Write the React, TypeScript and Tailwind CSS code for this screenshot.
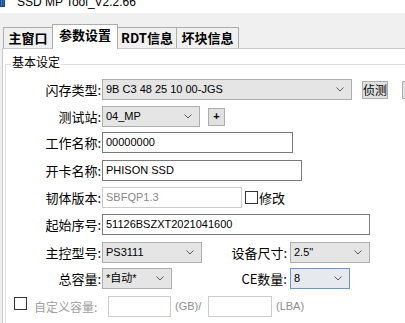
import React from "react";

const sans = "font-['Liberation_Sans','Noto_Sans_CJK_SC',sans-serif]";
const cjk = "font-['Noto_Sans_CJK_SC','Liberation_Sans',sans-serif]";

const Chevron = () => (
  <svg width="8" height="5" viewBox="0 0 8 5" className="shrink-0">
    <path d="M0.5 0.5 L4 4 L7.5 0.5" fill="none" stroke="#5a5a5a" strokeWidth="1" />
  </svg>
);

const Combo = ({
  value,
  className,
  focused,
}: {
  value: string;
  className: string;
  focused?: boolean;
}) => (
  <div
    className={`${className} h-[21px] shrink-0 flex items-center justify-between border pl-[3px] pr-[7px] ${
      focused ? "border-[#6b97cc] bg-[#e6e9ee]" : "border-[#adadad] bg-[#e5e5e5]"
    }`}
  >
    <span className={`${sans} text-[11px] leading-none text-black`}>{value}</span>
    <Chevron />
  </div>
);

const TextBox = ({
  value,
  className,
  disabled,
}: {
  value?: string;
  className: string;
  disabled?: boolean;
}) => (
  <div
    className={`${className} h-[21px] shrink-0 flex items-center border bg-white pl-[3px] ${sans} text-[11px] leading-none ${
      disabled ? "border-[#cccccc] text-[#8a8a8a]" : "border-[#7a7a7a] text-black"
    }`}
  >
    {value}
  </div>
);

const Label = ({ text, className = "w-[95px]" }: { text: string; className?: string }) => (
  <div className={`${className} shrink-0 text-right ${cjk} text-[13px] leading-[15px] text-black whitespace-nowrap`}>
    {text}
  </div>
);

const Check = ({ className = "" }: { className?: string }) => (
  <div className={`${className} w-[13px] h-[13px] shrink-0 border border-[#333333] bg-white`} />
);

const Tab = ({ text, className }: { text: string; className: string }) => (
  <div
    className={`${className} shrink-0 flex justify-center pt-[3px] border-[#adadad] ${cjk} font-bold text-[13px] leading-[14px] text-black`}
  >
    {text}
  </div>
);

export default function App() {
  return (
    <div className="w-[405px] h-[323px] overflow-hidden bg-[#f0f0f0]">
      {/* title bar, cut off at the top */}
      <div className="h-[13px] bg-white flex items-start overflow-hidden">
        <svg width="5" height="7" viewBox="0 0 5 7" className="shrink-0">
          <rect x="0" y="0" width="5" height="7" fill="#16468c" />
          <rect x="1" y="0" width="1" height="6" fill="#3d86d6" />
          <rect x="3" y="0" width="1" height="6" fill="#2f6fc0" />
        </svg>
        <div className={`ml-[12px] -mt-[4px] ${sans} text-[12px] leading-[12px] text-black whitespace-nowrap`}>
          SSD MP Tool_V2.2.66
        </div>
      </div>

      {/* tabs */}
      <div className="h-[35px] flex items-end pl-[3px]">
        <Tab text="主窗口" className="w-[49px] h-[21px] border-t border-l bg-[#f0f0f0]" />
        <Tab text="参数设置" className="relative z-10 -mb-px w-[66px] h-[25px] border-t border-l border-r bg-white" />
        <Tab text="RDT信息" className="w-[59px] h-[21px] border-t border-r bg-[#f0f0f0]" />
        <Tab text="坏块信息" className="w-[62px] h-[21px] border-t border-r bg-[#f0f0f0]" />
      </div>

      {/* tab page */}
      <div className="ml-[2px] w-[440px] h-[300px] border-l border-t border-[#c8c8c8] bg-white pl-[2px] pt-[7px]">
        <fieldset className="w-[430px] h-[290px] border border-[#dcdcdc]">
          <legend className={`ml-[5px] px-[1px] pb-[4px] ${cjk} text-[12px] leading-[12px] text-black`}>
            基本设定
          </legend>
          <div className="flex flex-col">
            <div className="mt-[7px] flex items-center">
              <Label text="闪存类型:" />
              <Combo value="9B C3 48 25 10 00-JGS" className="ml-[1px] w-[250px]" />
              <div className={`ml-[10px] w-[26px] h-[18px] shrink-0 flex items-center justify-center border border-[#adadad] bg-[#e1e1e1] ${cjk} text-[12px] leading-none text-black`}>
                侦测
              </div>
              <div className="ml-[14px] w-[30px] h-[18px] shrink-0 border border-[#adadad] bg-[#e1e1e1]" />
            </div>

            <div className="mt-[6px] flex items-center">
              <Label text="测试站:" />
              <Combo value="04_MP" className="ml-[1px] w-[98px]" />
              <div className={`ml-[8px] w-[17px] h-[18px] shrink-0 flex items-center justify-center border border-[#adadad] bg-[#e1e1e1] ${sans} font-bold text-[11px] leading-none text-black`}>
                +
              </div>
            </div>

            <div className="mt-[5px] flex items-center">
              <Label text="工作名称:" />
              <TextBox value="00000000" className="ml-[1px] w-[191px]" />
            </div>

            <div className="mt-[7px] flex items-center">
              <Label text="开卡名称:" />
              <TextBox value="PHISON SSD" className="ml-[1px] w-[200px]" />
            </div>

            <div className="mt-[6px] flex items-center">
              <Label text="韧体版本:" />
              <TextBox value="SBFQP1.3" disabled className="ml-[1px] w-[140px]" />
              <Check className="ml-[3px]" />
              <span className={`ml-[1px] ${cjk} text-[13px] leading-[15px] text-black`}>修改</span>
            </div>

            <div className="mt-[6px] flex items-center">
              <Label text="起始序号:" />
              <TextBox value="51126BSZXT2021041600" className="ml-[1px] w-[268px]" />
            </div>

            <div className="mt-[7px] flex items-center">
              <Label text="主控型号:" />
              <Combo value="PS3111" className="ml-[1px] w-[100px]" />
              <Label text="设备尺寸:" className="w-[86px] pr-[1px]" />
              <Combo value={'2.5"'} className="ml-[2px] w-[80px]" />
            </div>

            <div className="mt-[5px] flex items-center">
              <Label text="总容量:" />
              <Combo value="*自动*" className="ml-[1px] w-[70px]" />
              <Label text="CE数量:" className="w-[116px] pr-[1px]" />
              <Combo value="8" focused className="ml-[2px] w-[60px]" />
            </div>

            <div className="mt-[7px] flex items-center">
              <Check className="ml-[8px] mb-[6px]" />
              <div className={`ml-[7px] w-[74px] shrink-0 ${cjk} text-[12px] leading-[14px] text-[#a0a0a0] whitespace-nowrap`}>
                自定义容量:
              </div>
              <TextBox disabled className="w-[63px]" />
              <div className={`ml-[4px] w-[33px] shrink-0 ${sans} text-[11px] leading-none text-[#8d8d8d]`}>
                (GB)/
              </div>
              <TextBox disabled className="w-[64px]" />
              <div className={`ml-[4px] shrink-0 ${sans} text-[11px] leading-none text-[#8d8d8d]`}>
                (LBA)
              </div>
            </div>

            <div className="mt-[6px] flex">
              <TextBox className="ml-[292px] w-[59px]" />
            </div>
          </div>
        </fieldset>
      </div>
    </div>
  );
}
